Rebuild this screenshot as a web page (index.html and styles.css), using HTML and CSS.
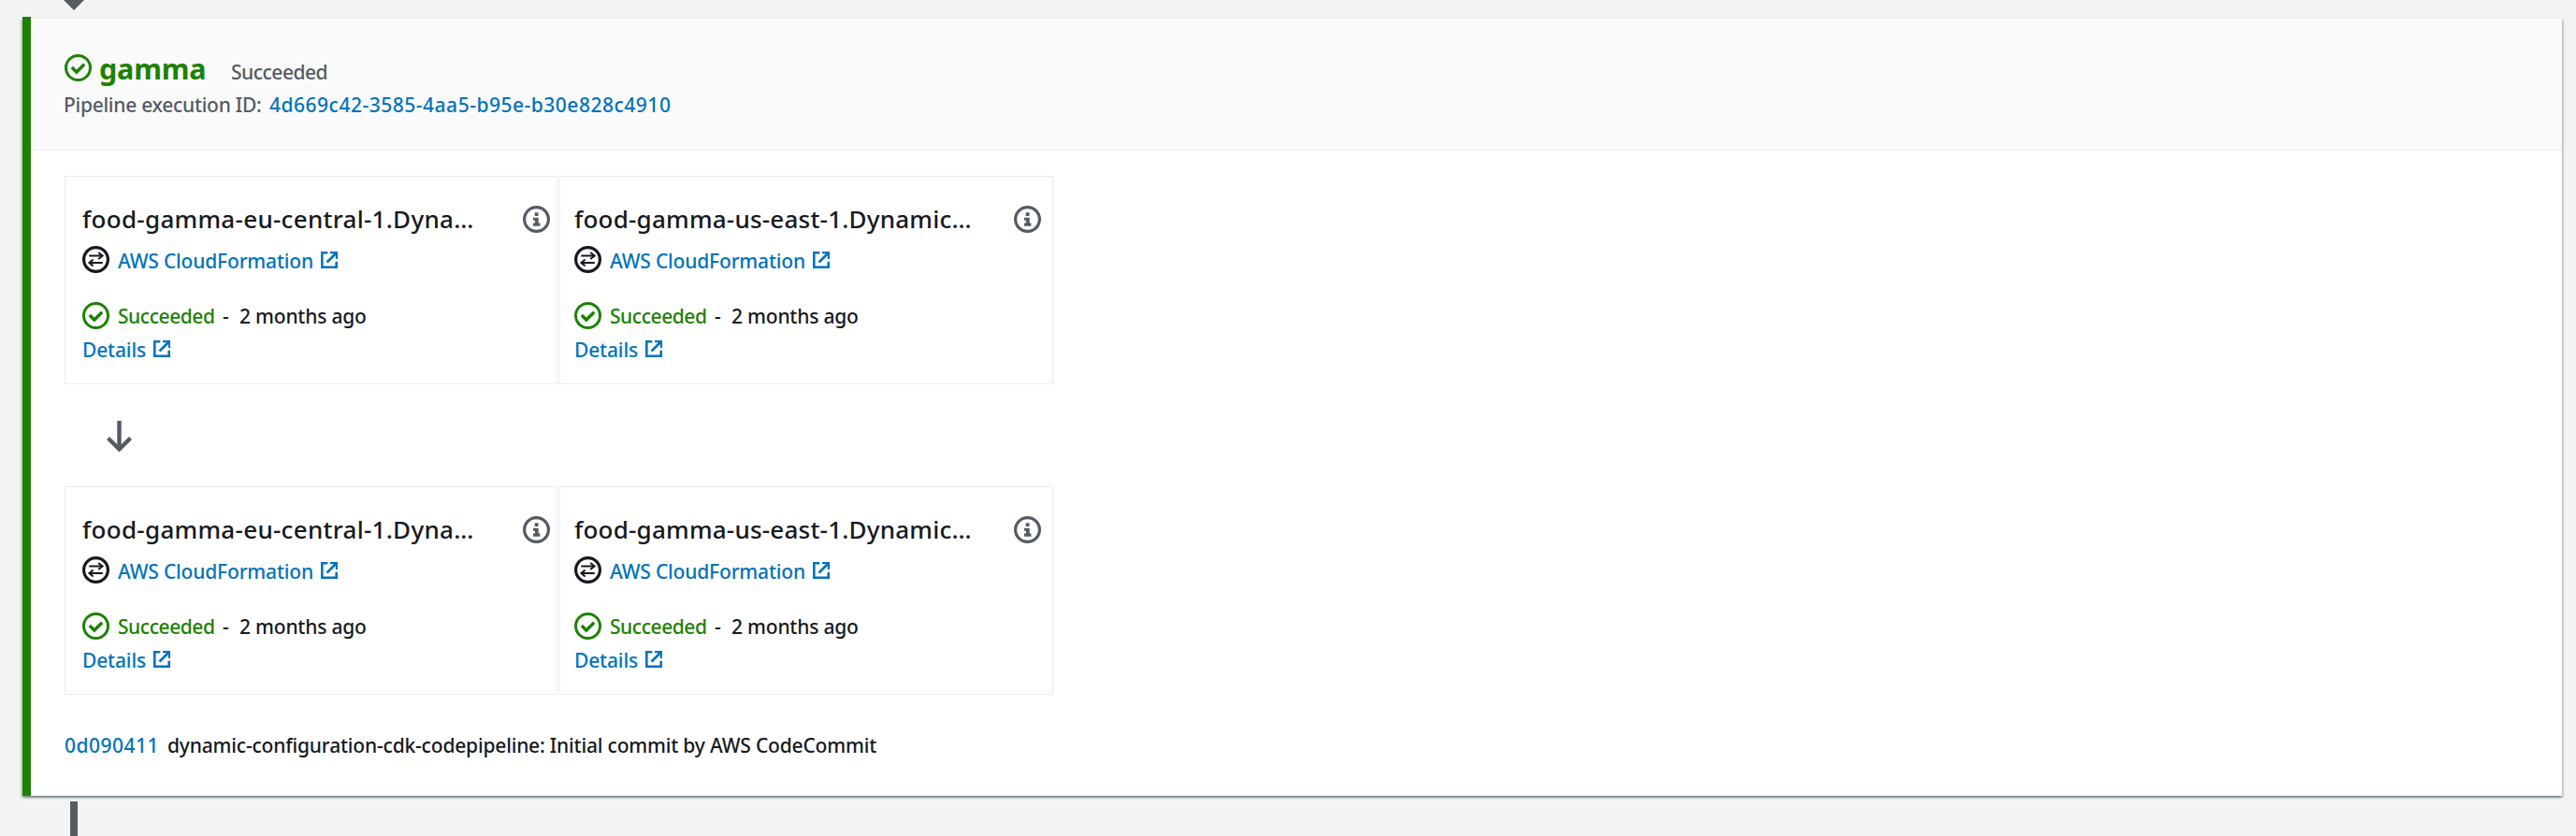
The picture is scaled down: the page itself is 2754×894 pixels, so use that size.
FILE: index.html
```
<!DOCTYPE html>
<html lang="en">
<head>
<meta charset="utf-8">
<title>Pipeline stage: gamma</title>
<link rel="stylesheet" href="styles.css">
</head>
<body>
<svg class="sprite" aria-hidden="true">
  <symbol id="check" viewBox="0 0 29 29">
    <circle cx="14.5" cy="14.5" r="13" fill="none" stroke="currentColor" stroke-width="3"/>
    <path d="M7.8 14l5 5 8.400-8.200" fill="none" stroke="currentColor" stroke-width="3.400"/>
  </symbol>
  <symbol id="swap" viewBox="0 0 29 29">
    <circle cx="14.5" cy="14.500" r="12.900" fill="none" stroke="currentColor" stroke-width="3.200"/>
    <path d="M7.200 10.500h13M8.500 18h13.300" fill="none" stroke="currentColor" stroke-width="2"/>
    <path d="M17.200 7l4.400 3.500-4.400 3.500M11.600 14.500L7.400 18l4.200 3.500" fill="none" stroke="currentColor" stroke-width="2"/>
  </symbol>
  <symbol id="info" viewBox="0 0 29 29">
    <circle cx="14.500" cy="14.500" r="12.900" fill="none" stroke="currentColor" stroke-width="3.200"/>
    <path d="M12.700 7.300h3.800v3.600h-3.800zM11 12.800h5.700v5.700h1.700v3.200h-7.400v-3.200h2v-2.700h-2z" fill="currentColor"/>
  </symbol>
  <symbol id="external" viewBox="0 0 18 18">
    <path d="M7.300 1.300H1.300v15.400h15.400v-6" fill="none" stroke="currentColor" stroke-width="2.600"/>
    <path d="M6.500 11.500L15.800 2.200" fill="none" stroke="currentColor" stroke-width="2.700"/>
    <path d="M10 0h8v8h-2.200V4L14 2.200h-4z" fill="currentColor"/>
  </symbol>
</svg>

<svg class="arrow-in" viewBox="0 0 22 11"><path d="M0 0h22L11 11z"/></svg>

<section class="stage">
  <header class="stage-header">
    <div class="stage-title">
      <svg class="icon ok"><use href="#check"/></svg>
      <h2 class="stage-name">gamma</h2>
      <span class="stage-status">Succeeded</span>
    </div>
    <div class="execution">
      <span class="execution-label">Pipeline execution ID:</span>
      <a class="execution-id">4d669c42-3585-4aa5-b95e-b30e828c4910</a>
    </div>
  </header>

  <div class="stage-body">
    <div class="actions">
      <article class="action">
        <div class="action-head"><h3 class="title-eu">food-gamma-eu-central-1.Dyna…</h3><svg class="icon info"><use href="#info"/></svg></div>
        <div class="provider"><svg class="icon"><use href="#swap"/></svg><a class="provider-link">AWS CloudFormation</a><svg class="ext"><use href="#external"/></svg></div>
        <div class="result"><svg class="icon ok"><use href="#check"/></svg><span class="ok-text">Succeeded</span><span class="dash">-</span><span class="age">2 months ago</span></div>
        <div class="details"><a>Details</a><svg class="ext"><use href="#external"/></svg></div>
      </article>
      <article class="action last">
        <div class="action-head"><h3 class="title-us">food-gamma-us-east-1.Dynamic…</h3><svg class="icon info"><use href="#info"/></svg></div>
        <div class="provider"><svg class="icon"><use href="#swap"/></svg><a class="provider-link">AWS CloudFormation</a><svg class="ext"><use href="#external"/></svg></div>
        <div class="result"><svg class="icon ok"><use href="#check"/></svg><span class="ok-text">Succeeded</span><span class="dash">-</span><span class="age">2 months ago</span></div>
        <div class="details"><a>Details</a><svg class="ext"><use href="#external"/></svg></div>
      </article>
    </div>

    <svg class="arrow-down" viewBox="0 0 28 34"><path d="M13.500 0v31M1.500 18.500l12 12 12-12" fill="none" stroke="currentColor" stroke-width="4.400"/></svg>

    <div class="actions">
      <article class="action">
        <div class="action-head"><h3 class="title-eu">food-gamma-eu-central-1.Dyna…</h3><svg class="icon info"><use href="#info"/></svg></div>
        <div class="provider"><svg class="icon"><use href="#swap"/></svg><a class="provider-link">AWS CloudFormation</a><svg class="ext"><use href="#external"/></svg></div>
        <div class="result"><svg class="icon ok"><use href="#check"/></svg><span class="ok-text">Succeeded</span><span class="dash">-</span><span class="age">2 months ago</span></div>
        <div class="details"><a>Details</a><svg class="ext"><use href="#external"/></svg></div>
      </article>
      <article class="action last">
        <div class="action-head"><h3 class="title-us">food-gamma-us-east-1.Dynamic…</h3><svg class="icon info"><use href="#info"/></svg></div>
        <div class="provider"><svg class="icon"><use href="#swap"/></svg><a class="provider-link">AWS CloudFormation</a><svg class="ext"><use href="#external"/></svg></div>
        <div class="result"><svg class="icon ok"><use href="#check"/></svg><span class="ok-text">Succeeded</span><span class="dash">-</span><span class="age">2 months ago</span></div>
        <div class="details"><a>Details</a><svg class="ext"><use href="#external"/></svg></div>
      </article>
    </div>

    <div class="commit"><a class="commit-id">0d090411</a><span class="commit-message">dynamic-configuration-cdk-codepipeline: Initial commit by AWS CodeCommit</span></div>
  </div>
</section>

<div class="connector"></div>
</body>
</html>
```
FILE: styles.css
```
* { box-sizing: border-box; }

body {
  margin: 0;
  height: 894px;
  overflow: hidden;
  display: flex;
  flex-direction: column;
  background: #f2f3f3;
  color: #16191f;
  font: 500 21px/32px "Noto Sans", "Open Sans", sans-serif;
}

h2, h3 { margin: 0; }
a { color: #0073bb; text-decoration: none; }
svg { display: block; flex: none; }
span, a, h2, h3 { white-space: nowrap; }

.sprite { position: absolute; width: 0; height: 0; }

.arrow-in {
  width: 22px;
  height: 11px;
  margin: 0 0 8px 68px;
  fill: #545b64;
}

.stage {
  position: relative;
  flex: none;
  height: 832px;
  margin: 0 15px 0 24px;
  padding-left: 9px;
  background: #fff;
  box-shadow:
    0 2px 2px 0 rgba(0, 28, 36, .3),
    2px 2px 2px 0 rgba(0, 28, 36, .15),
    -2px 2px 2px 0 rgba(0, 28, 36, .15);
}

/* Status bar along the left edge */
.stage::before {
  content: "";
  position: absolute;
  left: 0;
  top: -1px;
  bottom: 0;
  width: 9px;
  background: #1d8102;
}

.stage-header {
  height: 142px;
  padding: 32px 36px 0;
  background: #fafafa;
  border-top: 1px solid #eaeded;
  border-bottom: 1px solid #eaeded;
}

.stage-title {
  display: flex;
  height: 44px;
  line-height: 42px;
  align-items: baseline;
}
.stage-title .icon { align-self: flex-start; margin-top: 6px; }

.stage-name {
  width: 140px;
  margin-left: 8px;
  font-size: 30.500px;
  font-weight: 700;
  color: #1d8102;
  letter-spacing: -.2px;
}
.stage-status { margin-left: 1px; color: #545b64; letter-spacing: -.5px; }

.execution { display: flex; }
.execution-label { width: 219px; margin-left: -1px; color: #545b64; letter-spacing: -.27px; }
.execution-id { margin-left: 1px; letter-spacing: .51px; }

.icon { width: 29px; height: 29px; }
.ok, .ok-text { color: #1d8102; }
.info { color: #545b64; }
.ext { width: 18px; height: 18px; margin-top: 6px; color: #0073bb; }

.stage-body { padding: 27px 36px 0; }

.actions { display: flex; gap: 2px; }

.action {
  width: 527px;
  height: 223px;
  padding: 27px 7px 0 18px;
  border: 1px solid #eaeded;
}
.action.last { width: 528px; padding: 27px 12px 0 15px; }

.action-head {
  display: flex;
  justify-content: space-between;
  height: 47px;
}
.action-head .icon { margin-top: 4px; }
.action-head h3 { font-size: 26px; font-weight: 500; line-height: 36px; }
.title-eu { letter-spacing: .29px; }
.title-us { letter-spacing: .22px; }

.provider { display: flex; height: 59px; }
.provider-link { margin-left: 9px; letter-spacing: -.18px; }
.provider .ext { margin-left: 8px; }

.result { display: flex; height: 36px; }
.result .icon { margin-top: 1px; }
.ok-text { width: 112px; margin-left: 9px; letter-spacing: -.45px; }
.dash { width: 18px; }
.age { letter-spacing: -.2px; }

.details { display: flex; gap: 8px; }
.details a { letter-spacing: -.15px; }

.arrow-down {
  width: 28px;
  height: 34px;
  margin: 39px 0 36px 45px;
  color: #545b64;
}

.commit { display: flex; margin-top: 38px; }
.commit-id { width: 110px; letter-spacing: .5px; }
.commit-message { letter-spacing: -.18px; }

.connector {
  width: 8px;
  flex: 1;
  margin: 6px 0 0 75px;
  background: #545b64;
}
```
